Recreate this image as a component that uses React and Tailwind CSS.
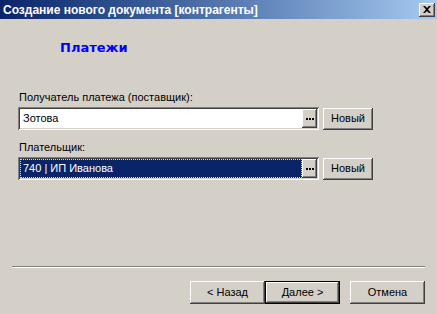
import React from 'react';

const raised =
  'bg-[#d4d0c8] shadow-[inset_-1px_-1px_#404040,inset_1px_1px_#ffffff,inset_-2px_-2px_#808080,inset_2px_2px_#d4d0c8]';
const sunken =
  'shadow-[inset_1px_1px_#808080,inset_-1px_-1px_#ffffff,inset_2px_2px_#404040,inset_-2px_-2px_#d4d0c8]';

function Ellipsis() {
  return (
    <div className={`${raised} w-[15px] h-[19px] flex items-center justify-center shrink-0`}>
      <div className="flex gap-[1px] mt-[1px]">
        <span className="w-[2px] h-[2px] bg-black" />
        <span className="w-[2px] h-[2px] bg-black" />
        <span className="w-[2px] h-[2px] bg-black" />
      </div>
    </div>
  );
}

function Field({ value, selected }) {
  return (
    <div className={`${sunken} w-[301px] h-[23px] p-[2px] bg-white flex`}>
      {selected ? (
        <div className="flex-1 bg-[#0a246a] border border-dotted border-[#f5db95] text-white pl-[2px] leading-[17px]">
          {value}
        </div>
      ) : (
        <div className="flex-1 bg-white pl-[3px] leading-[19px]">{value}</div>
      )}
      <Ellipsis />
    </div>
  );
}

function Btn({ children, def, w = 'w-[75px]', h = 'h-[23px]' }) {
  if (def) {
    return (
      <div className={`${w} ${h} border border-black flex`}>
        <div className={`${raised} flex-1 flex items-center justify-center`}>{children}</div>
      </div>
    );
  }
  return <div className={`${raised} ${w} ${h} flex items-center justify-center`}>{children}</div>;
}

export default function App() {
  return (
    <div className="w-[437px] h-[314px] bg-[#d4d0c8] overflow-hidden flex flex-col text-[11px] text-black font-['Liberation_Sans',Arial,sans-serif]">
      <div className="h-[19px] bg-gradient-to-r from-[#0a246a] to-[#a6caf0] flex items-center justify-between pl-[3px] pr-[2px]">
        <span className="text-white font-bold text-[12px]">
          Создание нового документа [контрагенты]
        </span>
        <div className={`${raised} w-[16px] h-[14px] flex items-center justify-center`}>
          <svg width="8" height="7" viewBox="0 0 8 7">
            <path d="M0 0h2l2 2 2-2h2L5 3.5 8 7H6L4 5 2 7H0l3-3.5z" fill="#000" />
          </svg>
        </div>
      </div>

      <div className="pt-[21px] pl-[60px] text-[13px] leading-[16px] font-bold text-[#0000ff] font-['DejaVu_Sans',sans-serif]">
        Платежи
      </div>

      <div className="mt-[35px] pl-[19px] leading-[13px]">Получатель платежа (поставщик):</div>
      <div className="mt-[3px] pl-[18px] flex items-center gap-[4px]">
        <Field value="Зотова" />
        <Btn w="w-[50px]" h="h-[22px]">Новый</Btn>
      </div>

      <div className="mt-[11px] pl-[19px] leading-[13px]">Плательщик:</div>
      <div className="mt-[3px] pl-[18px] flex items-center gap-[4px]">
        <Field value="740 | ИП Иванова" selected />
        <Btn w="w-[50px]" h="h-[22px]">Новый</Btn>
      </div>

      <div className="mt-[86px] ml-[12px] w-[413px] border-t border-t-[#808080] border-b border-b-white" />

      <div className="mt-[13px] flex justify-end pr-[12px]">
        <Btn>&lt; Назад</Btn>
        <Btn def>Далее &gt;</Btn>
        <div className="w-[10px]" />
        <Btn>Отмена</Btn>
      </div>
    </div>
  );
}
